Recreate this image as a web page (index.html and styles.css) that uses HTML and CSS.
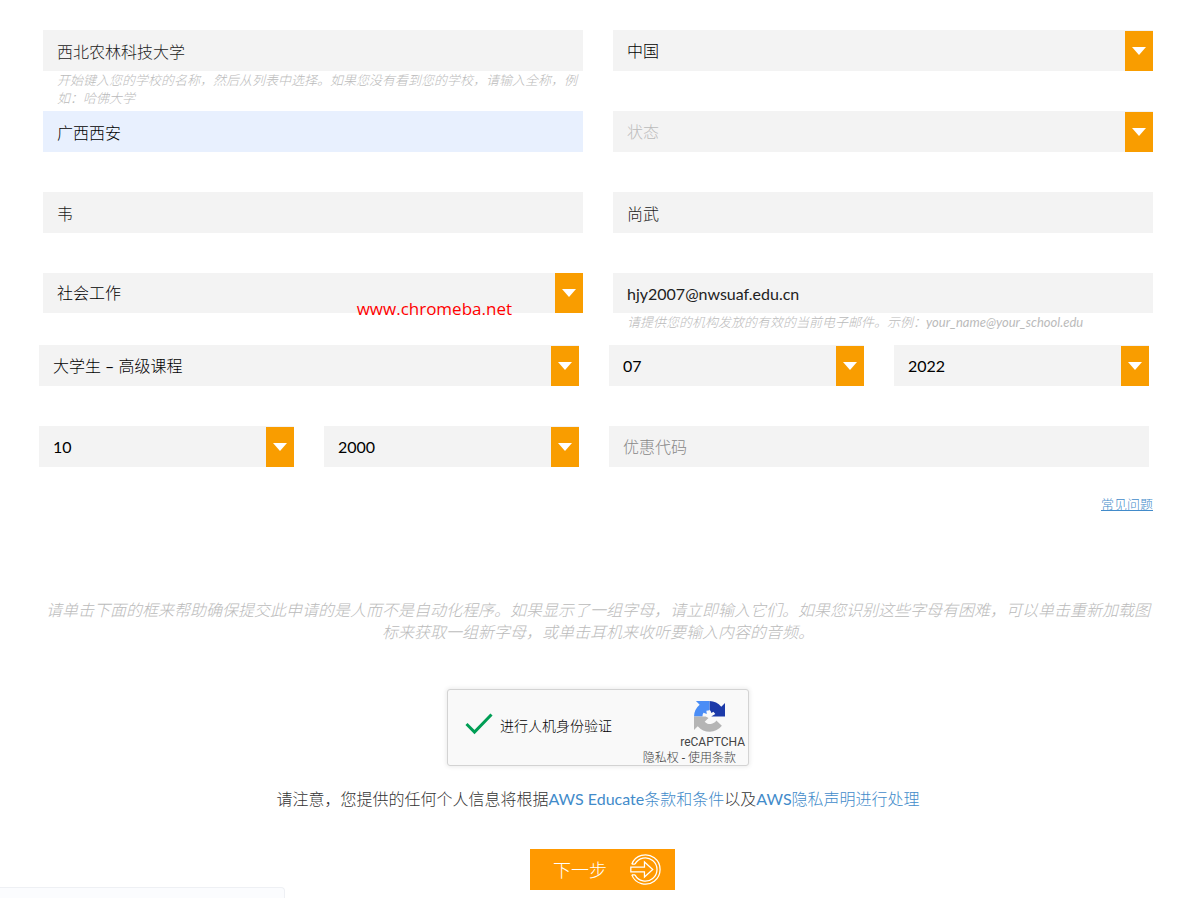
FILE: index.html
```html
<!DOCTYPE html>
<html lang="zh-CN">
<head>
<meta charset="utf-8">
<meta name="viewport" content="width=device-width, initial-scale=1">
<title>AWS Educate</title>
<link rel="stylesheet" href="styles.css">
</head>
<body>
<form class="form">
  <div class="grid">
    <div class="field">
      <input class="control" type="text" aria-label="学校名称" value="西北农林科技大学">
      <p class="hint">开始键入您的学校的名称，然后从列表中选择。如果您没有看到您的学校，请输入全称，例如：哈佛大学</p>
    </div>
    <div class="field">
      <div class="select"><select class="control" aria-label="国家"><option>中国</option></select></div>
    </div>
    <div class="field">
      <input class="control control-autofill" type="text" aria-label="城市" value="广西西安">
    </div>
    <div class="field">
      <div class="select"><select class="control control-empty" aria-label="状态"><option>状态</option></select></div>
    </div>
    <div class="field"><input class="control" type="text" aria-label="姓" value="韦"></div>
    <div class="field"><input class="control" type="text" aria-label="名" value="尚武"></div>
    <div class="field field-short">
      <div class="select"><select class="control" aria-label="专业"><option>社会工作</option></select></div>
      <span class="watermark">www.chromeba.net</span>
    </div>
    <div class="field field-short">
      <input class="control" type="email" aria-label="电子邮件" value="hjy2007@nwsuaf.edu.cn">
      <p class="hint">请提供您的机构发放的有效的当前电子邮件。示例：your_name@your_school.edu</p>
    </div>
  </div>
  <div class="grid grid-study">
    <div class="field">
      <div class="select"><select class="control" aria-label="年级"><option>大学生 – 高级课程</option></select></div>
    </div>
    <div class="field pair">
      <div class="select"><select class="control" aria-label="毕业月份"><option>07</option></select></div>
      <div class="select"><select class="control" aria-label="毕业年份"><option>2022</option></select></div>
    </div>
    <div class="field field-last pair">
      <div class="select"><select class="control" aria-label="出生月份"><option>10</option></select></div>
      <div class="select"><select class="control" aria-label="出生年份"><option>2000</option></select></div>
    </div>
    <div class="field field-last">
      <input class="control" type="text" aria-label="优惠代码" placeholder="优惠代码">
    </div>
  </div>
  <p class="faq"><a href="#">常见问题</a></p>
  <p class="captcha-help">请单击下面的框来帮助确保提交此申请的是人而不是自动化程序。如果显示了一组字母，请立即输入它们。如果您识别这些字母有困难，可以单击重新加载图标来获取一组新字母，或单击耳机来收听要输入内容的音频。</p>
  <div class="captcha">
    <svg class="check" viewBox="0 0 28 22" aria-hidden="true"><path d="M1.500 11 9.500 19 26.500 1.500" fill="none" stroke="#009e55" stroke-width="3"/></svg>
    <span class="captcha-label">进行人机身份验证</span>
    <div class="brand">
      <svg class="brand-logo" viewBox="0 0 64 64" aria-hidden="true">
        <path fill="#1c3aa9" d="M64 32V4l-7.700 7.700A32 32 0 0 0 32 0v17.500a15 15 0 0 1 4 7.500l4-3 4 5-8.500 5z"/>
        <path fill="#4a8df6" d="M32 0H4l7.700 7.700A32 32 0 0 0 0 32h17.500a15 15 0 0 1 2-8l7 3-1-7 6.500-1z"/>
        <path fill="#b5b5b5" d="M0 32v28l7.700-7.700A32 32 0 0 0 57.500 51L46 40a15 15 0 0 1-24 3l8-8-6-3z"/>
      </svg>
      <span class="brand-name">reCAPTCHA</span>
      <span class="brand-links"><a href="#">隐私权</a> - <a href="#">使用条款</a></span>
    </div>
  </div>
  <p class="notice">请注意，您提供的任何个人信息将根据<a href="#">AWS Educate条款和条件</a>以及<a href="#">AWS隐私声明进行处理</a></p>
  <button class="next" type="submit">
    <span>下一步</span>
    <svg class="next-icon" viewBox="0 0 30 30" fill="none" stroke="#fff" stroke-width="1.200" aria-hidden="true">
      <path d="M1.700 9.800A14.200 14.200 0 1 1 1.700 20.200M4.800 9.800A11.300 11.300 0 1 1 4.800 20.200M1.700 9.800h3.100M1.700 20.200h3.100"/>
      <path d="M.8 12.800H14V7.700l8 7.300-8 7.300v-5.100H.8z"/>
    </svg>
  </button>
</form>
<div class="status"></div>
</body>
</html>
```
FILE: styles.css
```css
* { box-sizing: border-box; }

body {
  margin: 0;
  background: #fff;
  color: #333;
  font: 16px/22px Lato, "Noto Sans CJK SC Light", "Noto Sans CJK SC", sans-serif;
}

p { margin: 0; }
a { color: #428bca; text-decoration: none; }

.form {
  display: flex;
  flex-direction: column;
  padding: 30px 25px 8px 43px;
}

.grid {
  display: grid;
  grid-template-columns: 1fr 1fr;
  column-gap: 30px;
}
.grid-study { margin: 0 4px 0 -4px; }

.field { position: relative; min-height: 81px; }
.field-short { min-height: 72px; }
.field-short .control { height: 40px; }
.field-last { min-height: 41px; }

.pair {
  display: grid;
  grid-template-columns: 1fr 1fr;
  column-gap: 30px;
  align-items: start;
}

.control {
  display: block;
  width: 100%;
  height: 41px;
  padding: 0 14px;
  border: 0;
  border-radius: 0;
  background: #f3f3f3;
  color: #222;
  font: inherit;
  appearance: none;
}
.control::placeholder { color: #888; opacity: 1; }
.control-autofill { background: #e8f0fe; color: #000; }

.select { position: relative; }
.select .control {
  padding-right: 42px;
  background: linear-gradient(#f99d00, #f99d00) right bottom / 28px 40px no-repeat #f3f3f3;
  color: #000;
}
.select .control-empty { color: #bbb; }
.select::after {
  content: "";
  position: absolute;
  bottom: 16px;
  right: 7px;
  width: 14px;
  height: 8px;
  background: #fff;
  clip-path: polygon(0 0, 100% 0, 50% 100%);
  pointer-events: none;
}

.hint {
  padding-left: 14px;
  color: #bbb;
  font-size: 13px;
  font-style: italic;
  line-height: 18px;
}

.watermark {
  position: absolute;
  top: 24px;
  right: 71px;
  color: #f00;
  font: 17px/24px "Open Sans", "Noto Sans", sans-serif;
}

.faq {
  margin-top: 26px;
  text-align: right;
  font-size: 13px;
}
.faq a { text-decoration: underline; }

.captcha-help {
  margin-top: 84px;
  color: #bbb;
  font-style: italic;
  text-align: center;
}

.captcha {
  display: flex;
  align-items: center;
  align-self: center;
  width: 302px;
  height: 77px;
  margin-top: 46px;
  padding: 0 3px 0 17px;
  border: 1px solid #d3d3d3;
  border-radius: 3px;
  background: #f9f9f9;
  box-shadow: 0 0 4px 1px rgba(0, 0, 0, 0.08);
  color: #000;
}
.check { width: 28px; height: 22px; margin-bottom: 8px; }
.captcha-label { margin: 0 0 4px 7px; font-size: 14px; }
.brand {
  display: flex;
  flex-direction: column;
  align-items: flex-end;
  flex: 1;
  color: #444;
  font: 12px/16px Roboto, "Noto Sans CJK SC Light", "Noto Sans CJK SC", sans-serif;
}
.brand a { color: inherit; }
.brand-logo { width: 31px; height: 31px; margin: 11px 20px 2px 0; }
.brand-links { margin-right: 9px; }

.notice { margin-top: 22px; text-align: center; }

.next {
  display: flex;
  align-items: center;
  align-self: center;
  justify-content: space-between;
  width: 145px;
  height: 41px;
  margin: 39px 0 0 9px;
  padding: 0 14px 0 23px;
  border: 0;
  background: #f90;
  color: #fff;
  font: inherit;
  font-size: 18px;
}
.next-icon { width: 31px; height: 31px; }

.status {
  position: fixed;
  bottom: 0;
  left: 0;
  width: 285px;
  height: 11px;
  border: 1px solid #eef0f4;
  border-width: 1px 1px 0 0;
  border-radius: 0 4px 0 0;
  background: #fbfcfe;
}
```
